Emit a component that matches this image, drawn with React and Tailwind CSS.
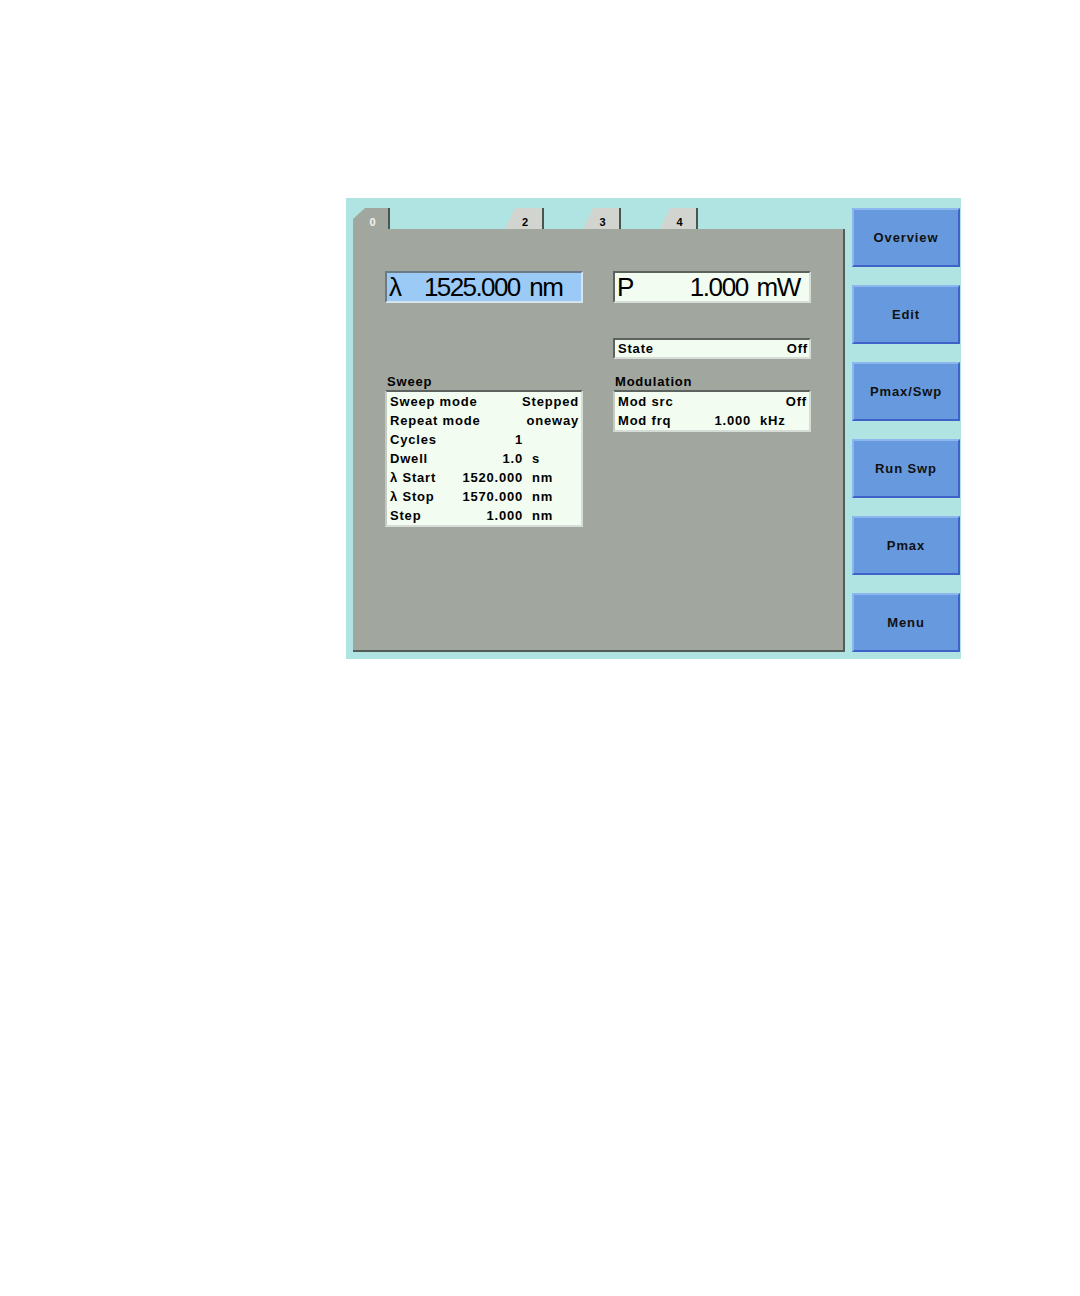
import React from "react";

const font = { fontFamily: '"Liberation Sans", Arial, sans-serif' };

const sweepRows = [
  { label: "Sweep mode", value: "Stepped", wide: true },
  { label: "Repeat mode", value: "oneway", wide: true },
  { label: "Cycles", value: "1", unit: "" },
  { label: "Dwell", value: "1.0", unit: "s" },
  { label: "λ Start", value: "1520.000", unit: "nm" },
  { label: "λ Stop", value: "1570.000", unit: "nm" },
  { label: "Step", value: "1.000", unit: "nm" },
];

const buttons = ["Overview", "Edit", "Pmax/Swp", "Run Swp", "Pmax", "Menu"];

function Row({ label, value, unit, wide }) {
  return (
    <div className="flex h-[19px] items-center pl-[3px] pr-[2px] whitespace-nowrap">
      <span className="flex-1">{label}</span>
      <span className="text-right">{value}</span>
      {!wide && <span className="w-[56px] pl-[9px]">{unit}</span>}
    </div>
  );
}

function Tab({ label, active, className }) {
  return (
    <div className={`flex h-full ${className}`}>
      <div
        className={`flex-1 flex items-end justify-center pb-[1px] text-[11px] leading-none font-bold ${
          active ? "bg-[#a1a79f] text-[#f4f4f0]" : "bg-[#d2d5cf] text-black"
        }`}
        style={{
          clipPath: active
            ? "polygon(0 11px, 12px 0, 100% 0, 100% 100%, 0 100%)"
            : "polygon(0 100%, 10px 0, 100% 0, 100% 100%)",
        }}
      >
        <span className={active ? "pl-[4px]" : "pl-[3px]"}>{label}</span>
      </div>
      <div className="w-[2px] bg-[#4b5550]" />
    </div>
  );
}

export default function App() {
  return (
    <div className="w-[1080px] h-[1296px] bg-white pt-[198px] pl-[346px]" style={font}>
      <div className="flex w-[615px] h-[461px] bg-[#b0e4e2]">
        {/* left: tabs + panel */}
        <div className="flex flex-col pl-[7px] w-[499px]">
          <div className="flex h-[31px] pt-[10px]">
            <Tab label="0" active className="w-[37px]" />
            <Tab label="2" className="w-[39px] ml-[115px]" />
            <Tab label="3" className="w-[38px] ml-[39px]" />
            <Tab label="4" className="w-[38px] ml-[39px]" />
          </div>
          <div className="h-[423px] w-[492px] bg-[#a1a79f] border-r-2 border-b-2 border-[#545c57] pl-[32px] pt-[42px] text-[13px] font-bold tracking-[0.8px] text-black">
            <div className="grid grid-cols-[198px_198px] gap-x-[30px]">
              {/* big readouts */}
              <div className="h-[32px] flex items-center bg-[#9ccaf6] border-2 border-t-[#6c7a86] border-l-[#6c7a86] border-b-[#d6e4ee] border-r-[#d6e4ee] font-normal tracking-[-1.6px] text-[26px] leading-none">
                <span className="w-[37px] pl-[2px]">λ</span>
                <span className="[word-spacing:4px]">1525.000 nm</span>
              </div>
              <div className="h-[32px] flex items-center justify-between bg-[#f2fcf0] border-2 border-t-[#5c625e] border-l-[#5c625e] border-b-[#d6dcd6] border-r-[#d6dcd6] font-normal tracking-[-1.4px] text-[26px] leading-none pr-[9px]">
                <span className="pl-[2px]">P</span>
                <span className="[word-spacing:3px]">1.000 mW</span>
              </div>

              <div />
              <div className="mt-[35px] h-[21px] flex items-center justify-between bg-[#f2fcf0] border-2 border-t-[#5c625e] border-l-[#5c625e] border-b-[#d6dcd6] border-r-[#d6dcd6] pl-[3px] pr-[1px]">
                <span>State</span>
                <span>Off</span>
              </div>

              {/* sweep */}
              <div className="mt-[14px]">
                <div className="pl-[2px] h-[17px] leading-[17px]">Sweep</div>
                <div className="bg-[#f2fcf0] border-2 border-t-[#5c625e] border-l-[#c4cac4] border-b-[#d6dcd6] border-r-[#d6dcd6]">
                  {sweepRows.map((r) => (
                    <Row key={r.label} {...r} />
                  ))}
                </div>
              </div>

              {/* modulation */}
              <div className="mt-[14px]">
                <div className="pl-[2px] h-[17px] leading-[17px]">Modulation</div>
                <div className="bg-[#f2fcf0] border-2 border-t-[#5c625e] border-l-[#c4cac4] border-b-[#d6dcd6] border-r-[#d6dcd6]">
                  <Row label="Mod src" value="Off" wide />
                  <Row label="Mod frq" value="1.000" unit="kHz" />
                </div>
              </div>
            </div>
          </div>
        </div>

        {/* right: softkeys */}
        <div className="flex flex-col gap-[18px] pt-[10px] pl-[7px]">
          {buttons.map((b) => (
            <div
              key={b}
              className="w-[108px] h-[59px] flex items-center justify-center bg-[#6699dd] border-2 border-t-[#8cb6ee] border-l-[#8cb6ee] border-b-[#3f62c8] border-r-[#3f62c8] text-[13px] font-bold tracking-[0.9px] text-[#111]"
            >
              {b}
            </div>
          ))}
        </div>
      </div>
    </div>
  );
}
